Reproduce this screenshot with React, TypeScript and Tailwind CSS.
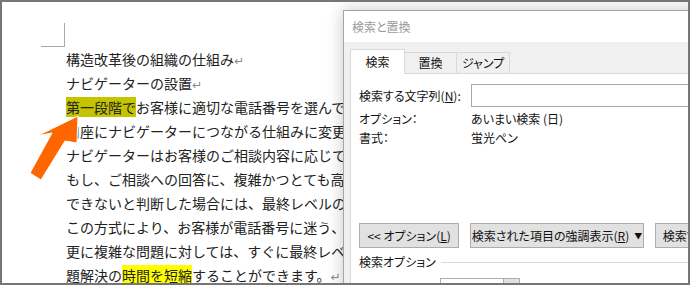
const lines: { text: string; hl?: [string, string, string]; mark?: boolean }[] = [
  { text: "構造改革後の組織の仕組み", mark: true },
  { text: "ナビゲーターの設置", mark: true },
  { text: "お客様に適切な電話番号を選んでいただき、各窓", hl: ["", "第一段階で", "sel"] },
  { text: "口座にナビゲーターにつながる仕組みに変更します。" },
  { text: "ナビゲーターはお客様のご相談内容に応じて担当" },
  { text: "もし、ご相談への回答に、複雑かつとても高度な" },
  { text: "できないと判断した場合には、最終レベルの担当" },
  { text: "この方式により、お客様が電話番号に迷う、別の" },
  { text: "更に複雑な問題に対しては、すぐに最終レベルへ" },
  { text: "することができます。", hl: ["題解決の", "時間を短縮", "yellow"], mark: true },
];

function Doc() {
  return (
    <div className="pt-[21px] pl-[39px] text-[14px] text-[#222]">
      <div className="w-[24px] h-[24px] border-r border-b border-[#a9a9a9]" />
      <div className="pl-[25px]">
        {lines.map((l, i) => (
          <div key={i} className="h-[24px] leading-[24px] whitespace-nowrap">
            {l.hl && (
              <>
                {l.hl[0]}
                <span className={l.hl[2] === "sel" ? "bg-[#c4c400]" : "bg-[#ffff00]"}>{l.hl[1]}</span>
              </>
            )}
            {l.text}
            {l.mark && <span className="text-[#8a8a8a] text-[12px] font-['DejaVu_Sans']">↵</span>}
          </div>
        ))}
      </div>
    </div>
  );
}

function Arrow() {
  return (
    <svg className="absolute left-0 top-0" width="100" height="200" viewBox="0 0 100 200">
      <polygon
        points="76,114 75,141 63,139 39,178 28,171 50,131 35,134"
        fill="#ff6600"
        stroke="#ffffff"
        strokeWidth="1"
        strokeLinejoin="round"
      />
    </svg>
  );
}

function Dialog() {
  return (
    <div className="absolute left-[341px] top-[8px] w-[420px] h-[300px] bg-[#f0f0f0] border border-[#a5a5a5] shadow-[0_0_16px_rgba(0,0,0,0.22)] text-[12px] text-[#111] [font-feature-settings:'palt']">
      <div className="h-[31px] bg-white pl-[8px] flex items-center text-[#9b9b9b]">検索と置換</div>
      <div className="pt-[7px] pl-[6px] flex items-end">
        <div className="relative z-10 -mb-px w-[55px] h-[25px] bg-white border border-b-0 border-[#d9d9d9] flex items-center justify-center">検索</div>
        <div className="w-[52px] h-[21px] border-t border-r border-[#d9d9d9] flex items-center justify-center">置換</div>
        <div className="w-[53px] h-[21px] border-t border-r border-[#d9d9d9] flex items-center justify-center">ジャンプ</div>
      </div>
      <div className="ml-[6px] h-[300px] bg-white border border-[#d9d9d9] pl-[8px] pt-[10px]">
        <div className="flex items-center h-[23px]">
          <div className="w-[112px]">
            検索する文字列(<span className="underline">N</span>):
          </div>
          <div className="flex-1 h-[23px] border border-[#a8a8a8] bg-white" />
        </div>
        <div className="flex mt-[2px] h-[19px] items-center">
          <div className="w-[112px]">オプション：</div>
          <div>あいまい検索 (日)</div>
        </div>
        <div className="flex h-[19px] items-center">
          <div className="w-[112px]">書式：</div>
          <div>蛍光ペン</div>
        </div>
        <div className="mt-[76px] flex gap-[11px] whitespace-nowrap">
          <div className="w-[104px] h-[25px] bg-[#e1e1e1] border border-[#adadad] flex items-center justify-center">
            &lt;&lt; オプション(<span className="underline">L</span>)
          </div>
          <div className="w-[180px] h-[25px] bg-[#e1e1e1] border border-[#adadad] flex items-center justify-center gap-[5px]">
            <span>
              検索された項目の強調表示(<span className="underline">R</span>)
            </span>
            <span className="text-[8px]">▼</span>
          </div>
          <div className="w-[110px] h-[25px] bg-[#e1e1e1] border border-[#adadad] flex items-center pl-[7px]">検索する場所</div>
        </div>
        <div className="mt-[5px] flex items-center h-[18px]">
          <span>検索オプション</span>
          <div className="flex-1 ml-[5px] border-t border-[#d9d9d9]" />
        </div>
        <div className="mt-[7px] flex items-start">
          <div className="w-[81px] pt-[4px] pl-[18px] whitespace-nowrap">検索方向(:)</div>
          <div className="w-[80px] h-[22px] border border-[#adadad] flex justify-end">
            <div className="w-[16px] h-full bg-[#e1e1e1] border-l border-[#adadad]" />
          </div>
        </div>
      </div>
    </div>
  );
}

export default function App() {
  return (
    <div className="relative w-[690px] h-[285px] bg-white border-2 border-[#767676] overflow-hidden font-['Noto_Sans_CJK_JP',sans-serif]">
      <Doc />
      <Arrow />
      <Dialog />
    </div>
  );
}
